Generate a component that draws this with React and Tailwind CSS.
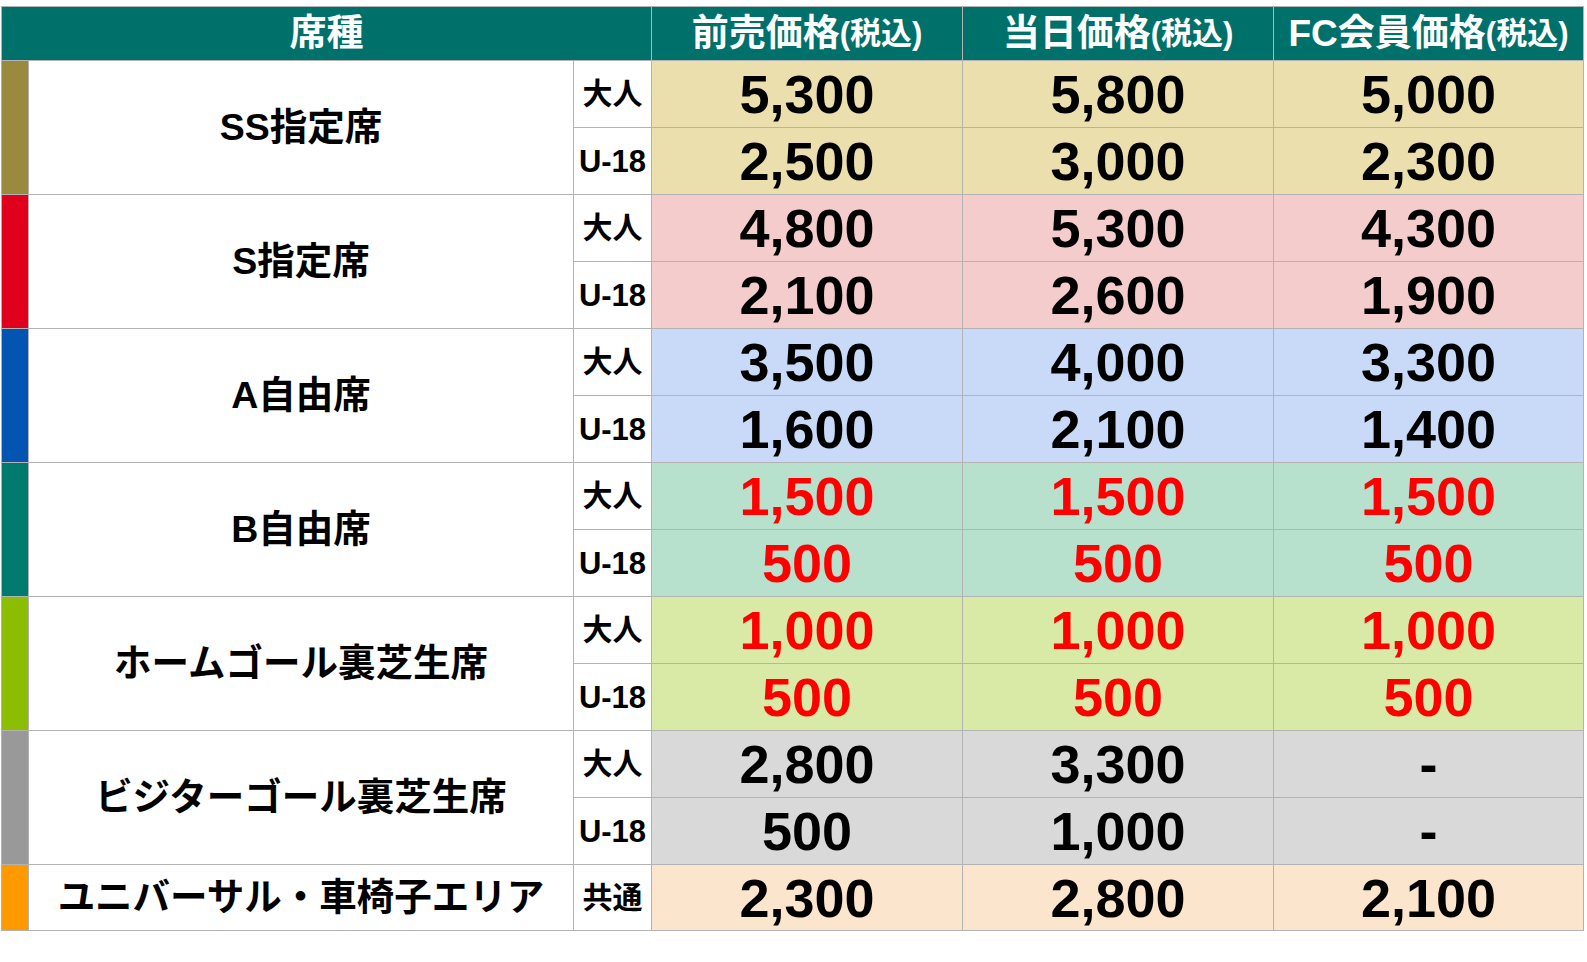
import React from "react";

const groups = [
  {
    name: "SS指定席",
    strip: "bg-[#998a3d]",
    bg: "bg-[#ebe0ad]",
    red: false,
    rows: [
      ["大人", ["5,300", "5,800", "5,000"]],
      ["U-18", ["2,500", "3,000", "2,300"]],
    ],
  },
  {
    name: "S指定席",
    strip: "bg-[#e0001b]",
    bg: "bg-[#f4cccc]",
    red: false,
    rows: [
      ["大人", ["4,800", "5,300", "4,300"]],
      ["U-18", ["2,100", "2,600", "1,900"]],
    ],
  },
  {
    name: "A自由席",
    strip: "bg-[#0454b2]",
    bg: "bg-[#c9daf8]",
    red: false,
    rows: [
      ["大人", ["3,500", "4,000", "3,300"]],
      ["U-18", ["1,600", "2,100", "1,400"]],
    ],
  },
  {
    name: "B自由席",
    strip: "bg-[#007a6d]",
    bg: "bg-[#b7e1cd]",
    red: true,
    rows: [
      ["大人", ["1,500", "1,500", "1,500"]],
      ["U-18", ["500", "500", "500"]],
    ],
  },
  {
    name: "ホームゴール裏芝生席",
    strip: "bg-[#8bbd00]",
    bg: "bg-[#d9eaa6]",
    red: true,
    rows: [
      ["大人", ["1,000", "1,000", "1,000"]],
      ["U-18", ["500", "500", "500"]],
    ],
  },
  {
    name: "ビジターゴール裏芝生席",
    strip: "bg-[#999999]",
    bg: "bg-[#d9d9d9]",
    red: false,
    rows: [
      ["大人", ["2,800", "3,300", "-"]],
      ["U-18", ["500", "1,000", "-"]],
    ],
  },
  {
    name: "ユニバーサル・車椅子エリア",
    strip: "bg-[#ff9900]",
    bg: "bg-[#fce5cd]",
    red: false,
    rows: [["共通", ["2,300", "2,800", "2,100"]]],
  },
];

const jp = { fontFamily: '"Liberation Sans", "Noto Sans CJK JP", sans-serif' };

function Header({ main }) {
  return (
    <div className="bg-[#00706a] flex items-center justify-center text-white font-bold">
      <span className="text-[37px] leading-none">{main}</span>
      <span className="text-[31px] leading-none">(税込)</span>
    </div>
  );
}

export default function App() {
  return (
    <div className="w-[1587px] h-[962px] bg-white" style={jp}>
      <div className="ml-px mt-[6px] inline-grid grid-cols-[26px_544px_77px_310px_310px_309px] grid-rows-[53px_repeat(12,66px)_65px] gap-px p-px bg-[#b3b3b3]">
        <div className="col-span-3 bg-[#00706a] flex items-center justify-center text-white font-bold text-[37px] leading-none">
          席種
        </div>
        <Header main="前売価格" />
        <Header main="当日価格" />
        <Header main="FC会員価格" />
        {groups.map((g) => {
          const span = g.rows.length === 2 ? "row-span-2" : "";
          return (
            <React.Fragment key={g.name}>
              <div className={`${g.strip} ${span}`} />
              <div
                className={`${span} bg-white flex items-center justify-center font-bold text-[37.5px] leading-none text-black`}
              >
                {g.name}
              </div>
              {g.rows.map(([label, prices]) => (
                <React.Fragment key={label}>
                  <div
                    className={`bg-white flex items-center justify-center leading-none text-black ${
                      label === "U-18" ? "font-bold text-[31px]" : "font-semibold text-[30px]"
                    }`}
                  >
                    {label}
                  </div>
                  {prices.map((p, i) => (
                    <div
                      key={i}
                      className={`${g.bg} flex items-center justify-center font-bold text-[54px] leading-none ${
                        g.red ? "text-[#ff0000]" : "text-black"
                      }`}
                    >
                      {p}
                    </div>
                  ))}
                </React.Fragment>
              ))}
            </React.Fragment>
          );
        })}
      </div>
    </div>
  );
}
